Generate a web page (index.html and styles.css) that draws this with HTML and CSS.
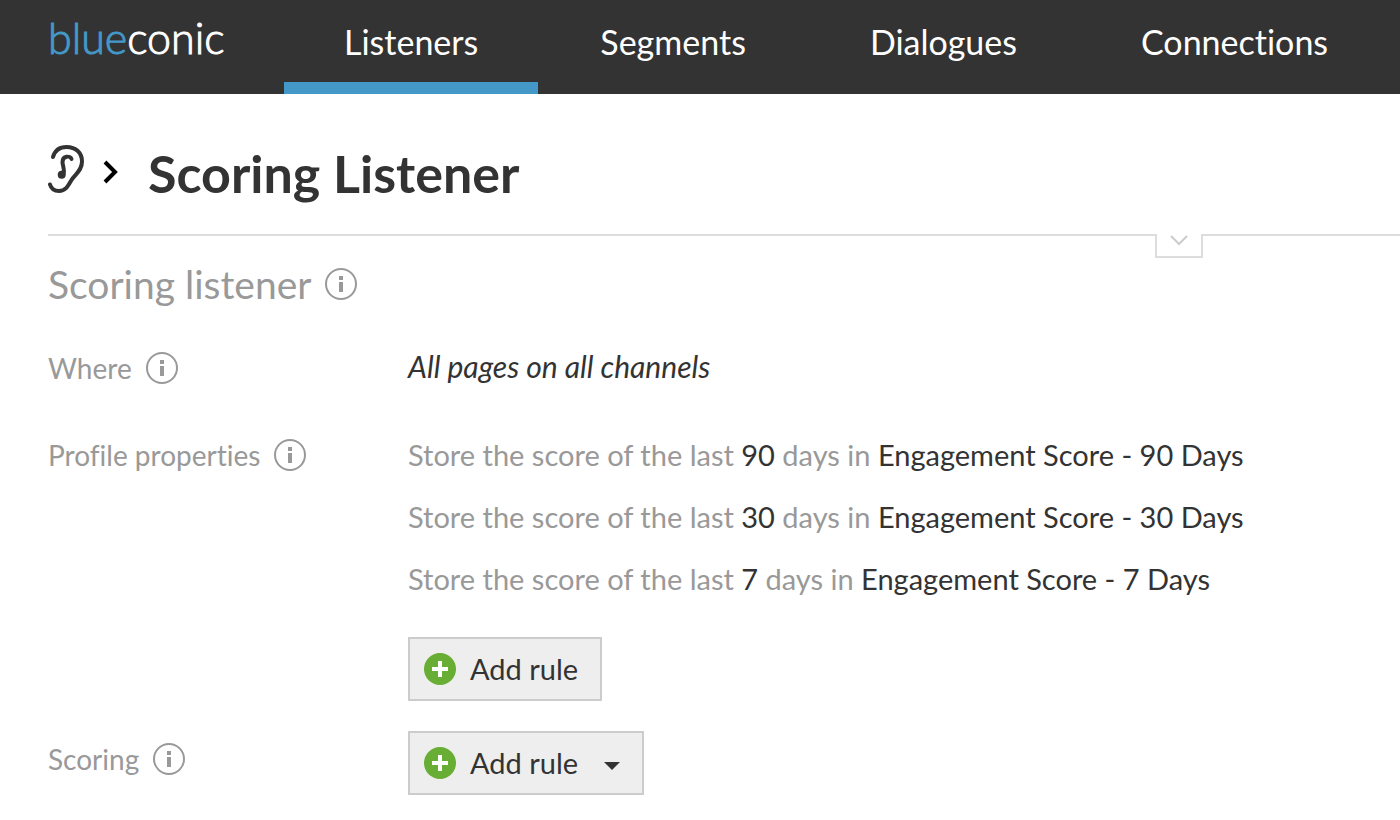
FILE: index.html
```html
<!DOCTYPE html>
<html lang="en">
<head>
<meta charset="utf-8">
<title>Scoring Listener</title>
<link rel="stylesheet" href="styles.css">
</head>
<body>
<svg class="symbols" aria-hidden="true">
  <symbol id="info" viewBox="0 0 32 32">
    <circle cx="16" cy="16" r="15" fill="none" stroke="#999" stroke-width="2"/>
    <path d="M14 8h4v4h-4zM14 14h4v10h-4z" fill="#999"/>
  </symbol>
  <symbol id="plus" viewBox="0 0 32 32">
    <circle cx="16" cy="16" r="16" fill="#69ae34"/>
    <path d="M14 8h4v6h6v4h-6v6h-4v-6H8v-4h6z" fill="#fff"/>
  </symbol>
</svg>
<header class="topbar">
  <a class="logo" href="#"><span class="logo-blue">blue</span>conic</a>
  <nav class="nav">
    <a class="tab active" href="#">Listeners</a>
    <a class="tab" href="#">Segments</a>
    <a class="tab" href="#">Dialogues</a>
    <a class="tab" href="#">Connections</a>
  </nav>
</header>
<main class="page">
  <div class="title-bar">
    <svg class="ear" viewBox="0 0 36 48" aria-hidden="true">
      <g fill="none" stroke="#333" stroke-width="4" stroke-linecap="round">
        <path d="M5 12C7 5 12 2 18.500 2C28 2 34 8 34 16.500C34 26 27 29 23.500 35C20 41 17.500 46 11 46C6 46 3 43 2 39.500"/>
        <path d="M23.500 14C22.500 10.500 14.500 10.500 14.500 17C14.500 21 17 24 15.500 29"/>
      </g>
      <circle cx="13.700" cy="29.700" r="4" fill="#333"/>
    </svg>
    <svg class="crumb" viewBox="0 0 16 24" aria-hidden="true"><path d="M2 2l10 10L2 22" fill="none" stroke="#000" stroke-width="4"/></svg>
    <h1 class="title">Scoring Listener</h1>
    <button class="expander" type="button" aria-label="Expand details">
      <svg class="chevron" viewBox="0 0 18 12" aria-hidden="true"><path d="M1 2l8 8 8-8" fill="none" stroke="#ccc" stroke-width="2"/></svg>
    </button>
  </div>
  <h2 class="subtitle">Scoring listener <svg class="icon" role="img" aria-label="Info"><use href="#info"/></svg></h2>
  <section class="row where">
    <h3 class="label">Where <svg class="icon" role="img" aria-label="Info"><use href="#info"/></svg></h3>
    <p class="value">All pages on all channels</p>
  </section>
  <section class="row properties">
    <h3 class="label">Profile properties <svg class="icon" role="img" aria-label="Info"><use href="#info"/></svg></h3>
    <div class="rules">
      <p class="rule">Store the score of the last <b>90</b> days in <b>Engagement Score - 90 Days</b></p>
      <p class="rule">Store the score of the last <b>30</b> days in <b>Engagement Score - 30 Days</b></p>
      <p class="rule">Store the score of the last <b>7</b> days in <b>Engagement Score - 7 Days</b></p>
      <button class="add" type="button"><svg class="icon" aria-hidden="true"><use href="#plus"/></svg>Add rule</button>
    </div>
  </section>
  <section class="row scoring">
    <h3 class="label">Scoring <svg class="icon" role="img" aria-label="Info"><use href="#info"/></svg></h3>
    <div>
      <button class="add" type="button"><svg class="icon" aria-hidden="true"><use href="#plus"/></svg>Add rule<svg class="caret" viewBox="0 0 16 8" aria-hidden="true"><path d="M0 0h16L8 8z" fill="#333"/></svg></button>
    </div>
  </section>
</main>
</body>
</html>
```
FILE: styles.css
```css
* { box-sizing: border-box; }
body {
  margin: 0;
  background: #fff;
  color: #333;
  font-family: Lato, "Liberation Sans", sans-serif;
  font-size: 29px;
  font-variant-ligatures: none;
  line-height: 36px;
}
h1, h2, h3, p { margin: 0; font-weight: 400; }
.symbols { display: none; }
.topbar {
  display: flex;
  height: 94px;
  padding-left: 48px;
  background: #333;
  overflow: hidden;
}
.logo {
  flex: none;
  width: 236px;
  padding-top: 14px;
  color: #fff;
  font-size: 43px;
  font-weight: 300;
  line-height: 48px;
  text-decoration: none;
  -webkit-text-stroke: 1px currentColor;
}
.logo-blue { color: #4398c8; }
.nav { display: flex; }
.tab {
  padding: 20px 62px 0;
  border-bottom: 12px solid transparent;
  color: #fff;
  font-size: 34px;
  line-height: 44px;
  text-decoration: none;
}
.active {
  padding-left: 60px;
  padding-right: 60px;
  border-bottom-color: #4398c8;
}
.page { padding-left: 48px; }
.title-bar {
  position: relative;
  display: flex;
  align-items: flex-start;
  height: 142px;
  padding-top: 51px;
  border-bottom: 2px solid #ddd;
}
.ear { width: 36px; height: 48px; }
.crumb { width: 16px; height: 24px; margin: 15px 29px 0 19px; }
.title { font-size: 52px; font-weight: 700; line-height: 56px; }
.expander {
  position: absolute;
  right: 197px;
  bottom: -24px;
  display: flex;
  justify-content: center;
  width: 48px;
  height: 24px;
  padding: 0;
  border: 2px solid #ddd;
  border-top: 0;
  background: #fff;
}
.chevron { width: 18px; height: 12px; }
.icon { flex: none; width: 32px; height: 32px; }
.subtitle {
  display: flex;
  align-items: center;
  gap: 14px;
  padding-top: 24px;
  color: #999;
  font-size: 39px;
  line-height: 48px;
}
.row { display: grid; grid-template-columns: 360px 1fr; }
.label {
  display: flex;
  align-items: center;
  align-self: start;
  gap: 14px;
  color: #999;
  font-size: 28px;
}
.where { margin-top: 42px; }
.value { font-size: 30px; font-style: italic; line-height: 32px; }
.properties { margin-top: 51px; }
.rules { display: grid; gap: 26px; justify-items: start; }
.rule { color: #999; }
.rule b { color: #333; font-weight: 400; }
.rules .add { margin-top: 14px; }
.scoring { margin-top: 30px; }
.scoring .label { padding-top: 10px; }
.add {
  display: flex;
  align-items: center;
  height: 64px;
  padding: 0 22px 0 14px;
  gap: 14px;
  border: 2px solid #ccc;
  background: #eee;
  color: #333;
  font: inherit;
}
.caret { width: 16px; height: 8px; margin: 6px 0 0 12px; }
```
